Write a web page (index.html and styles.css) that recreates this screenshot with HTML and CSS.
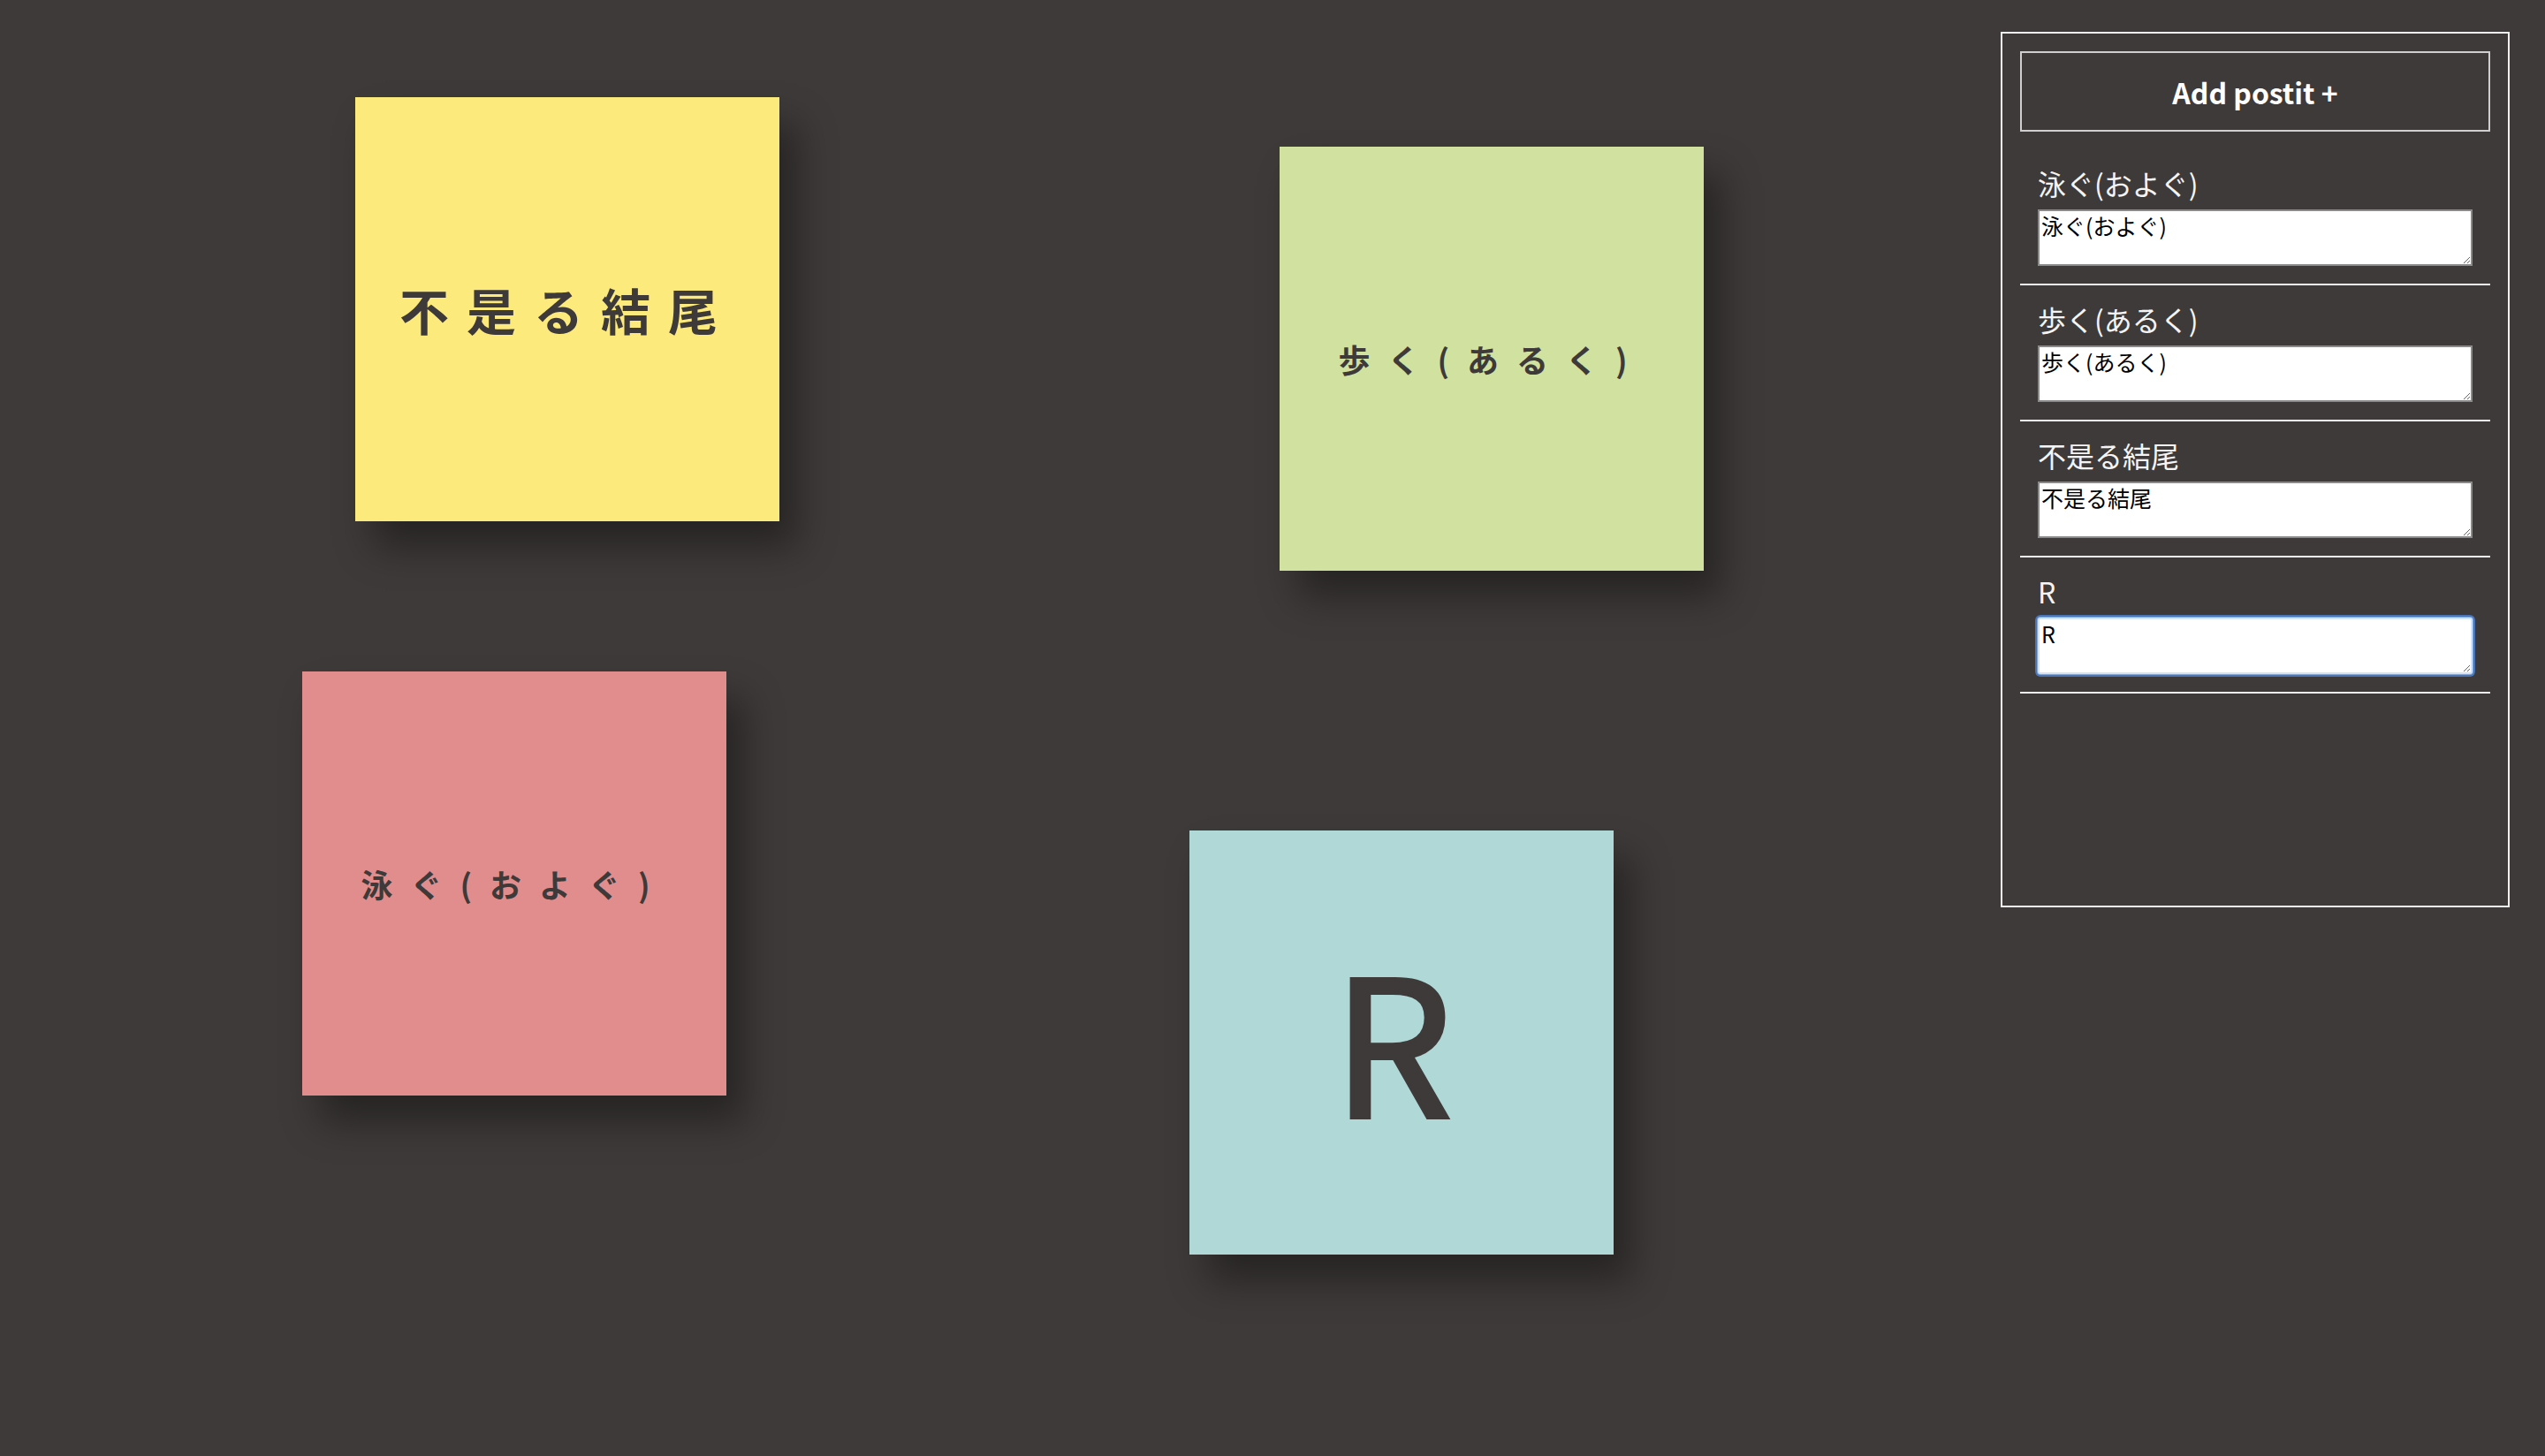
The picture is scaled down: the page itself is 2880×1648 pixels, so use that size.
FILE: index.html
```html
<!DOCTYPE html>
<html lang="ja">
<head>
  <meta charset="UTF-8">
  <title>Postit Board</title>
  <meta name="viewport" content="width=device-width, initial-scale=1.0">
  <link rel="stylesheet" href="styles.css">
</head>
<body>

<div class="page">
  <div class="board">
    <div class="note note-yellow" style="left:402px;top:110px;">
      <p class="note-text note-text-md">不是る結尾</p>
    </div>
    <div class="note note-green" style="left:1448px;top:166px;">
      <p class="note-text">歩く(あるく)</p>
    </div>
    <div class="note note-pink" style="left:342px;top:760px;">
      <p class="note-text">泳ぐ(およぐ)</p>
    </div>
    <div class="note note-blue" style="left:1346px;top:940px;">
      <p class="note-text note-text-xl">R</p>
    </div>
  </div>

  <div class="panel">
    <button class="add-btn" type="button">Add postit +</button>
    <ul class="postit-list">
      <li class="postit-item">
        <label class="postit-label">泳ぐ(およぐ)</label>
        <textarea class="postit-input">泳ぐ(およぐ)</textarea>
      </li>
      <li class="postit-item">
        <label class="postit-label">歩く(あるく)</label>
        <textarea class="postit-input">歩く(あるく)</textarea>
      </li>
      <li class="postit-item">
        <label class="postit-label">不是る結尾</label>
        <textarea class="postit-input">不是る結尾</textarea>
      </li>
      <li class="postit-item">
        <label class="postit-label">R</label>
        <textarea class="postit-input is-focused">R</textarea>
      </li>
    </ul>
  </div>
</div>

</body>
</html>
```

FILE: styles.css
```css
* {
  box-sizing: border-box;
  font-family: "Noto Sans CJK JP", "Noto Sans", sans-serif;
}
body {
  margin: 0;
  padding: 0;
  background: #3e3a39;
  overflow: hidden;
}
.page {
  display: flex;
  height: 1648px;
}

/* board with the notes */
.board {
  position: relative;
  flex: 1;
}
.note {
  position: absolute;
  width: 480px;
  height: 480px;
  display: flex;
  align-items: center;
  justify-content: center;
  box-shadow: 20px 30px 40px rgba(0,0,0,0.38);
}
.note-yellow { background: #fdea7d; }
.note-green  { background: #d0e1a0; }
.note-pink   { background: #e28d8d; }
.note-blue   { background: #afd8d7; }

.note-text {
  margin: 0;
  color: #3e3a39;
  font-size: 36px;
  font-weight: bold;
  letter-spacing: 20px;
  line-height: 1;
  white-space: nowrap;
}
.note-text-md {
  font-size: 56px;
}
.note-text-xl {
  font-size: 214px;
  font-weight: normal;
  -webkit-text-stroke: 4px #3e3a39;
  padding-bottom: 16px;
}

/* side panel */
.panel {
  width: 576px;
  height: 991px;
  margin: 36px 40px 0 0;
  padding: 20px;
  border: 2px solid #f0f0f0;
}
.add-btn {
  display: block;
  width: 100%;
  height: 91px;
  background: transparent;
  border: 2px solid #cfcfcf;
  color: #fff;
  font-size: 32px;
  font-weight: bold;
  cursor: pointer;
}
.postit-list {
  list-style: none;
  margin: 20px 0 0;
  padding: 0;
}
.postit-item {
  padding: 20px 20px 20px;
  border-bottom: 2px solid #f0f0f0;
}
.postit-label {
  display: block;
  color: #f4f4f4;
  font-size: 32px;
  line-height: 36px;
  margin-bottom: 12px;
}
.postit-input {
  display: block;
  width: 100%;
  height: 64px;
  padding: 1px 2px;
  border: 2px solid #8a8a8a;
  background: #fff;
  color: #000;
  font-size: 25px;
  line-height: 1.2;
}
.postit-input.is-focused {
  outline: none;
  border-color: #d4e4f8;
  border-radius: 3px;
  box-shadow: 0 0 0 1px #7aa6e2, 0 0 0 3px #4b75b4;
}
```
